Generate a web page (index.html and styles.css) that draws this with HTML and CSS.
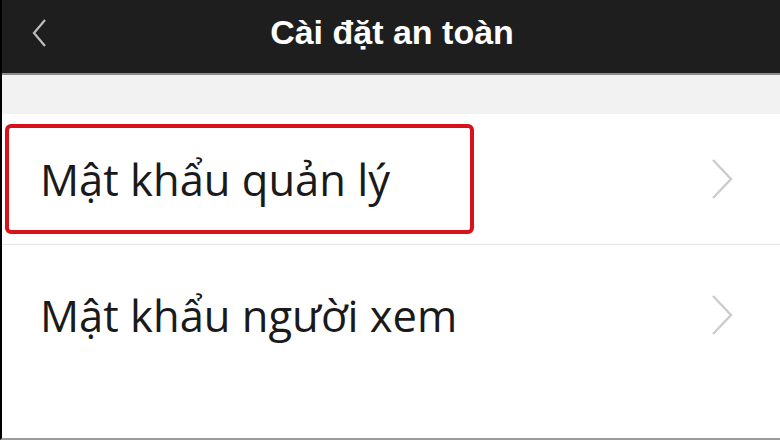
FILE: index.html
```html
<!DOCTYPE html>
<html lang="vi">
<head>
<meta charset="utf-8">
<link rel="stylesheet" href="styles.css">
</head>
<body>
<div class="screen">
  <header class="topbar">
    <svg class="back" viewBox="0 0 20 30" width="20" height="30"><path d="M15 2 L4 15 L15 28" fill="none" stroke="#bdbdbd" stroke-width="2.2"/></svg>
    <h1 class="title">Cài đặt an toàn</h1>
  </header>
  <div class="gap"></div>
  <ul class="list">
    <li class="row">
      <span class="label">Mật khẩu quản lý</span>
      <svg class="chev" viewBox="0 0 24 42" width="24" height="42"><path d="M3 2 L21 21 L3 40" fill="none" stroke="#cccccc" stroke-width="2.4"/></svg>
      <span class="highlight"></span>
    </li>
    <li class="row">
      <span class="label">Mật khẩu người xem</span>
      <svg class="chev" viewBox="0 0 24 42" width="24" height="42"><path d="M3 2 L21 21 L3 40" fill="none" stroke="#cccccc" stroke-width="2.4"/></svg>
    </li>
  </ul>
</div>
</body>
</html>
```
FILE: styles.css
```css
* { box-sizing: border-box; }
html, body { margin: 0; padding: 0; }
body { width: 780px; height: 440px; overflow: hidden; background: #fff; font-family: "Open Sans", "Noto Sans", sans-serif; }
.screen { width: 780px; height: 440px; display: flex; flex-direction: column; border-left: 2px solid #000; border-bottom: 2px solid #9a9a9a; background: #fff; }
.topbar { height: 75px; background: #1e1e1e; border-bottom: 2px solid #8c8c8c; display: flex; align-items: center; justify-content: center; position: relative; flex: none; }
.back { position: absolute; left: 28px; top: 18px; }
.title { margin: 0 0 8px 2px; color: #fff; font-family: "Liberation Sans", Arial, sans-serif; font-weight: 700; font-size: 34px; }
.gap { height: 39px; background: #f2f2f2; flex: none; }
.list { list-style: none; margin: 0; padding: 0; }
.row { position: relative; height: 131px; display: flex; align-items: center; justify-content: space-between; padding: 0 46px 0 38px; border-bottom: 1px solid #e6e6e6; }
.row + .row { border-bottom: none; height: 140px; }
.label { font-size: 43.5px; color: #1a1a1a; }
.chev { flex: none; }
.highlight { position: absolute; left: 3px; top: 10px; width: 469px; height: 110px; border: 4px solid #d8121b; border-radius: 6px; }
```
